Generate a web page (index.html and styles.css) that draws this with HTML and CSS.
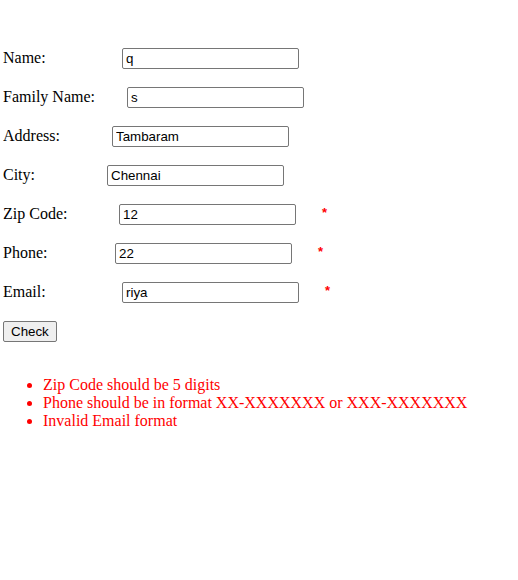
FILE: index.html
```html
<!DOCTYPE html>
<html>
<head>
<meta charset="utf-8">
<link rel="stylesheet" href="styles.css">
</head>
<body>
<form class="form">
  <p class="row"><span class="lbl w-name">Name:</span><input class="field" type="text" value="q"></p>
  <p class="row"><span class="lbl w-family">Family Name:</span><input class="field" type="text" value="s"></p>
  <p class="row"><span class="lbl w-address">Address:</span><input class="field" type="text" value="Tambaram"></p>
  <p class="row"><span class="lbl w-city">City:</span><input class="field" type="text" value="Chennai"></p>
  <p class="row"><span class="lbl w-zip">Zip Code:</span><input class="field" type="text" value="12"><span class="req">*</span></p>
  <p class="row"><span class="lbl w-phone">Phone:</span><input class="field" type="text" value="22"><span class="req">*</span></p>
  <p class="row"><span class="lbl w-email">Email:</span><input class="field" type="text" value="riya"><span class="req">*</span></p>
  <p class="row"><button class="btn" type="button">Check</button></p>
</form>
<ul class="errors">
  <li>Zip Code should be 5 digits</li>
  <li>Phone should be in format XX-XXXXXXX or XXX-XXXXXXX</li>
  <li>Invalid Email format</li>
</ul>
</body>
</html>
```
FILE: styles.css
```css
html { background: #fff; }
body {
  margin: 0 0 0 3px;
  padding-top: 32px;
  font-family: "Liberation Serif", "Times New Roman", serif;
  font-size: 16px;
  color: #000;
}
.form { margin: 0; }
.row { margin: 18px 0 0 0; }
.row:first-child { margin-top: 16px; }
.lbl { display: inline-block; }
.w-name { width: 119px; }
.w-family { width: 124px; }
.w-address { width: 109px; }
.w-city { width: 104px; }
.w-zip { width: 116px; }
.w-phone { width: 112px; }
.w-email { width: 119px; }
.field {
  box-sizing: border-box;
  width: 177px;
  height: 21px;
  margin: 0;
  padding: 1px 3px;
  border: 1px solid #767676;
  border-radius: 2px;
  font-family: "Liberation Sans", Arial, sans-serif;
  font-size: 13.33px;
  color: #000;
  background: #fff;
}
.req {
  color: #f00;
  margin-left: 26px;
  font-family: "Liberation Sans", Arial, sans-serif;
  font-size: 13px;
  font-weight: bold;
  vertical-align: 2px;
}
.btn {
  margin: 0;
  padding: 1px 7px;
  height: 21px;
  border: 1px solid #767676;
  border-radius: 2px;
  background: #efefef;
  font-family: "Liberation Sans", Arial, sans-serif;
  font-size: 13.33px;
  color: #000;
}
.errors {
  margin: 34px 0 0 0;
  padding-left: 40px;
  color: #f00;
}
```
